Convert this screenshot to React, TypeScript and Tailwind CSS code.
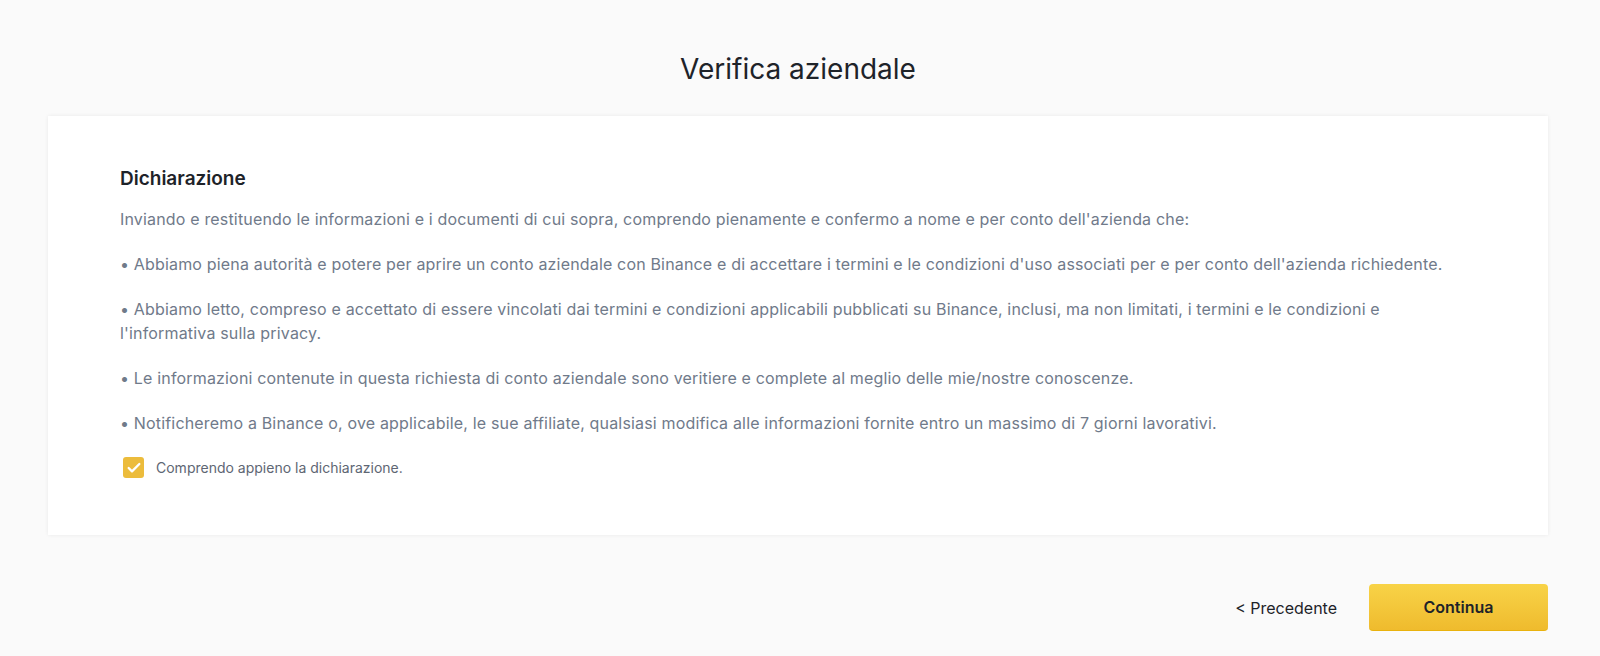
import { Check } from 'lucide-react'

const paragraphs = [
  "Inviando e restituendo le informazioni e i documenti di cui sopra, comprendo pienamente e confermo a nome e per conto dell'azienda che:",
  "• Abbiamo piena autorità e potere per aprire un conto aziendale con Binance e di accettare i termini e le condizioni d'uso associati per e per conto dell'azienda richiedente.",
  "• Abbiamo letto, compreso e accettato di essere vincolati dai termini e condizioni applicabili pubblicati su Binance, inclusi, ma non limitati, i termini e le condizioni e l'informativa sulla privacy.",
  "• Le informazioni contenute in questa richiesta di conto aziendale sono veritiere e complete al meglio delle mie/nostre conoscenze.",
  "• Notificheremo a Binance o, ove applicabile, le sue affiliate, qualsiasi modifica alle informazioni fornite entro un massimo di 7 giorni lavorativi.",
]

export default function App() {
  return (
    <div className="min-h-[656px] w-full bg-[#fafafa] font-['Inter',sans-serif] text-[#1e2329]">
      <div className="flex flex-col pt-[49px] pl-[48px] pr-[52px]">
        {/* Title */}
        <h1 className="text-center text-[28px] leading-[40px] font-normal text-[#1e2329]">
          Verifica aziendale
        </h1>

        {/* Card */}
        <div className="mt-[27px] h-[419px] bg-white shadow-[0_0_4px_rgba(0,0,0,0.07)] pl-[72px] pr-[84px] pt-[49px]">
          <h2 className="text-[19px] leading-[28px] font-semibold text-[#1e2329]">Dichiarazione</h2>
          <div className="mt-[14px] flex flex-col gap-[21px] text-[16px] leading-[24px] tracking-[0.17px] text-[#707a8a]">
            {paragraphs.map((p) => (
              <p key={p}>{p}</p>
            ))}
          </div>
          <label className="mt-[22px] flex items-center gap-[12px] pl-[3px]">
            <span className="flex h-[21px] w-[21px] items-center justify-center rounded-[3px] bg-[#ecbc3c]">
              <Check className="h-[16px] w-[16px] text-white" strokeWidth={3.5} />
            </span>
            <span className="text-[14px] leading-[20px] text-[#5e6673]">Comprendo appieno la dichiarazione.</span>
          </label>
        </div>

        {/* Actions */}
        <div className="mt-[49px] flex items-center justify-end gap-[32px]">
          <button className="text-[16px] leading-[24px] text-[#1e2329]">&lt; Precedente</button>
          <button className="h-[47px] w-[179px] rounded-[4px] bg-gradient-to-b from-[#f8d347] to-[#efbb2d] border-b border-[#e9b20d] text-[16px] font-semibold text-[#1e2329]">
            Continua
          </button>
        </div>
      </div>
    </div>
  )
}
